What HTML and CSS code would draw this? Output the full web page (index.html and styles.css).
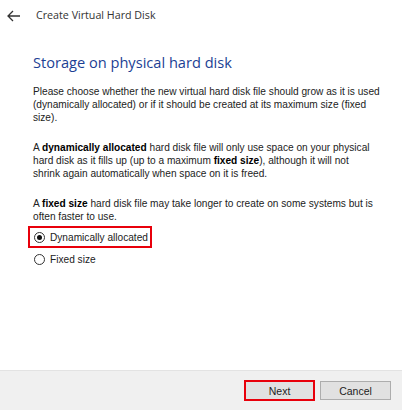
FILE: index.html
```html
<!DOCTYPE html>
<html>
<head>
<meta charset="utf-8">
<link rel="stylesheet" href="styles.css">
</head>
<body>
<div class="window">
  <div class="header">
    <svg class="back" width="14" height="12" viewBox="0 0 14 12"><path d="M6 1 L1 6 L6 11 M1 6 H13" fill="none" stroke="#333" stroke-width="1.3"/></svg>
    <span class="title">Create Virtual Hard Disk</span>
  </div>
  <div class="main">
    <h1 class="heading">Storage on physical hard disk</h1>
    <p class="para">Please choose whether the new virtual hard disk file should grow as it is used<br>(dynamically allocated) or if it should be created at its maximum size (fixed<br>size).</p>
    <p class="para">A <b>dynamically allocated</b> hard disk file will only use space on your physical<br>hard disk as it fills up (up to a maximum <b>fixed size</b>), although it will not<br>shrink again automatically when space on it is freed.</p>
    <p class="para">A <b>fixed size</b> hard disk file may take longer to create on some systems but is<br>often faster to use.</p>
    <div class="options">
      <label class="radio highlight"><span class="dot checked"></span>Dynamically allocated</label>
      <label class="radio"><span class="dot"></span>Fixed size</label>
    </div>
  </div>
  <div class="footer">
    <button class="btn highlight-btn">Next</button>
    <button class="btn">Cancel</button>
  </div>
</div>
</body>
</html>
```
FILE: styles.css
```css
html, body { margin: 0; padding: 0; background: #fff; }
body { font-family: "Liberation Sans", Tahoma, sans-serif; color: #222; }
.window { width: 402px; height: 410px; display: flex; flex-direction: column; }
.header { height: 30px; display: flex; align-items: center; padding-left: 7px; }
.back { margin-right: 15px; margin-top: 1px; }
.title { font-family: "Open Sans", "Segoe UI", sans-serif; font-size: 10.7px; color: #333; }
.main { flex: 1; padding-left: 33px; }
.heading { margin: 21px 0 0; font-family: "Open Sans", sans-serif; font-weight: 400; font-size: 14.6px; color: #1c3f94; line-height: 22px; }
.para { margin: 12px 0 0; font-size: 10.15px; line-height: 13px; color: #222; white-space: nowrap; }
.para + .para { margin-top: 17px; }
.para b { color: #000; }
.options { margin-top: 3px; display: flex; flex-direction: column; align-items: flex-start; }
.radio { display: flex; align-items: center; font-size: 10.15px; height: 18px; margin-left: -5px; padding: 0 2px 0 4px; border: 2px solid transparent; }
.radio.highlight { border-color: #e8000b; }
.radio + .radio { margin-top: 0; }
.dot { width: 11px; height: 11px; border: 1px solid #333; border-radius: 50%; margin-right: 5px; box-sizing: border-box; position: relative; background: #fff; }
.dot.checked::after { content: ""; position: absolute; left: 2px; top: 2px; width: 5px; height: 5px; border-radius: 50%; background: #111; }
.footer { height: 40px; background: #f0f0f0; border-top: 1px solid #e3e3e3; box-sizing: border-box; display: flex; justify-content: flex-end; align-items: center; padding-right: 11px; gap: 5px; }
.btn { width: 71px; height: 19px; background: #e1e1e1; border: 1px solid #adadad; font-family: "Liberation Sans", sans-serif; font-size: 10.5px; color: #222; padding: 0; }
.highlight-btn { border: 2px solid #e8000b; height: 21px; }
```
